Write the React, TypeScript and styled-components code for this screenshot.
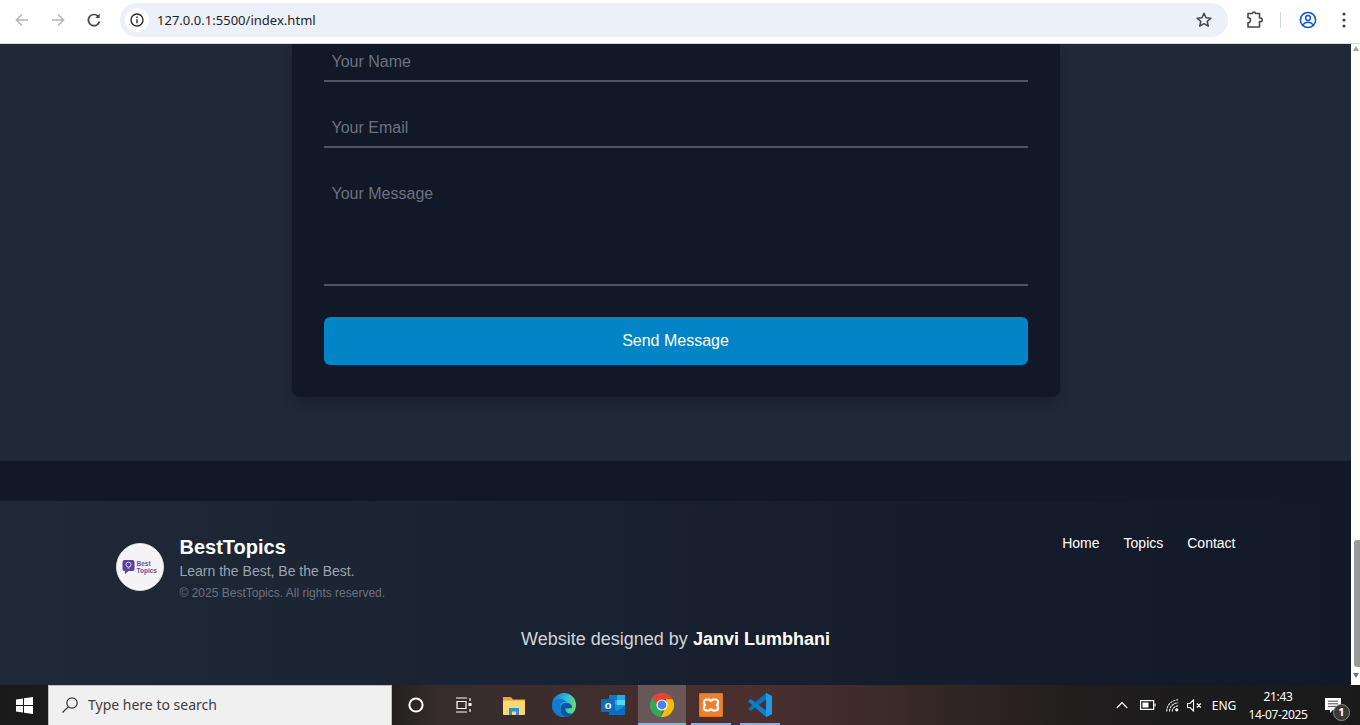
import React from "react";
import styled, { createGlobalStyle } from "styled-components";

const Global = createGlobalStyle`
  html, body { margin: 0; padding: 0; height: 100%; overflow: hidden; }
  #root { height: 100%; }
  * { box-sizing: border-box; }
  input::placeholder, textarea::placeholder { color: #6b7280; opacity: 1; }
`;

const Shell = styled.div`
  width: 1360px; height: 725px; display: flex; flex-direction: column; overflow: hidden;
  font-family: "Liberation Sans", Arial, sans-serif;
`;
const Toolbar = styled.header`
  height: 44px; flex: none; background: #fff; display: flex; align-items: center;
  padding: 0 0 4px 0; border-bottom: 1px solid #d9d9d9;
`;
const NavSlot = styled.div<{ $w: number }>`
  width: ${p => p.$w}px; flex: none; display: flex; align-items: center; justify-content: center;
`;
const NavGroup = styled.div`
  display: flex; padding-left: 4px; width: 120px; flex: none;
`;
const Omnibox = styled.div`
  width: 1108px; height: 34px; flex: none; border-radius: 17px; background: #ebf0f9;
  display: flex; align-items: center; padding: 0 15px 0 5px;
`;
const InfoChip = styled.div`
  width: 24px; height: 24px; border-radius: 50%; background: #fff; display: flex;
  align-items: center; justify-content: center; flex: none;
`;
const Url = styled.span`
  margin-left: 8px; font-family: "Noto Sans", sans-serif; font-size: 13px; color: #1f1f1f; flex: 1;
  letter-spacing: 0.02px;
`;
const Divider = styled.div`
  width: 1px; height: 16px; background: #c7d7f2; flex: none;
`;

const Viewport = styled.div`
  flex: 1; min-height: 0; display: flex;
`;
const Page = styled.div`
  flex: 1; min-width: 0; display: flex; flex-direction: column; background: #1f2937;
`;
const ContactSection = styled.section`
  padding-bottom: 64px; background: #1f2937;
`;
const Card = styled.form`
  width: 768px; margin: 0 auto; background: #111827; padding: 0 32px 32px;
  border-radius: 0 0 8px 8px; box-shadow: 0 10px 15px -3px rgba(0,0,0,.15), 0 4px 6px -4px rgba(0,0,0,.1);
  display: flex; flex-direction: column;
`;
const TextInput = styled.input`
  display: block; width: 100%; height: 38px; border: 0; border-bottom: 2px solid #4b5563;
  background: transparent; padding: 0 8px; font: 16px "Liberation Sans", Arial, sans-serif; color: #fff;
  margin-bottom: 28px; outline: none;
`;
const TextArea = styled.textarea`
  display: block; width: 100%; height: 110px; border: 0; border-bottom: 2px solid #4b5563;
  background: transparent; padding: 9px 8px 8px; font: 16px/18px "Liberation Sans", Arial, sans-serif; color: #fff;
  margin-bottom: 31px; outline: none; resize: none;
`;
const Send = styled.button`
  height: 48px; width: 100%; border: 0; border-radius: 6px; background: #0284c7; color: #fff;
  font: 16px "Liberation Sans", Arial, sans-serif;
`;
const Band = styled.div`
  height: 40px; background: #111827; flex: none;
`;
const Footer = styled.footer`
  flex: 1; background: linear-gradient(to right, #1f2937, #111827); padding: 32px 0;
`;
const FooterInner = styled.div`
  width: 1120px; margin: 0 auto;
`;
const FooterRow = styled.div`
  display: flex; justify-content: space-between; align-items: flex-start;
`;
const Brand = styled.div`
  display: flex; align-items: center; gap: 16px;
`;
const LogoBadge = styled.div`
  width: 48px; height: 48px; border-radius: 50%; background: #f5f3f6; border: 1px solid #d8d8d8;
  box-shadow: inset 0 0 0 1px #fff;
  display: flex; align-items: center; justify-content: center; flex: none;
`;
const BrandText = styled.div`
  display: flex; flex-direction: column;
`;
const BrandName = styled.div`
  font-size: 20px; line-height: 28px; font-weight: 700; color: #fff;
`;
const Tagline = styled.div`
  font-size: 14px; line-height: 20px; color: #9ca3af;
`;
const Copyright = styled.div`
  font-size: 12px; line-height: 16px; color: #6b7280; margin-top: 4px;
`;
const FooterNav = styled.nav`
  display: flex; gap: 24px;
`;
const FooterLink = styled.a`
  font-size: 14px; line-height: 20px; color: #fff;
`;
const Credit = styled.p`
  margin: 24px 0 0; text-align: center; font-size: 18px; line-height: 28px; color: #d1d5db;
  b { color: #fff; font-weight: 700; }
`;

const Scrollbar = styled.div`
  width: 9px; flex: none; background: #fff; display: flex; flex-direction: column; align-items: flex-end;
  padding-top: 2px;
`;
const ArrowUp = styled.div`
  width: 0; height: 0; border-left: 3.5px solid transparent; border-right: 3.5px solid transparent;
  border-bottom: 5px solid #a3a3a3; margin-right: 1px;
`;
const ArrowDown = styled.div`
  width: 0; height: 0; border-left: 3.5px solid transparent; border-right: 3.5px solid transparent;
  border-top: 5px solid #6f6f6f; margin-right: 1px; margin-top: 6px;
`;
const Thumb = styled.div`
  width: 6px; height: 127px; background: #9a9a9a; border-radius: 3px 0 0 3px; margin-top: 489px;
`;

const Taskbar = styled.div`
  height: 40px; flex: none; display: flex; align-items: stretch;
  background: linear-gradient(to right, #1a1a1a 0%, #1f1d1d 28%, #352c2c 32%, #4a302e 55%, #3d2b2a 64%, #1f1d1d 80%, #1a1a1a 100%);
`;
const StartButton = styled.div`
  width: 48px; flex: none; display: flex; align-items: center; justify-content: center;
`;
const SearchBox = styled.div`
  width: 344px; flex: none; background: #f0f0f0; border: 1px solid #bdbdbd; border-bottom: 0; display: flex; align-items: center;
  padding: 0 0 2px 12px; gap: 9px; color: #3d3d3d; font: 14px "Noto Sans", sans-serif;
`;
const TaskSlot = styled.div<{ $w: number; $active?: boolean; $run?: number }>`
  width: ${p => p.$w}px; flex: none; display: flex; align-items: center; justify-content: center; position: relative;
  background: ${p => (p.$active ? "rgba(255,255,255,.2)" : "transparent")};
  &::after {
    content: "";
    display: ${p => (p.$run ? "block" : "none")};
    position: absolute; bottom: 0; left: 50%; height: 2px; background: #76b9ed;
    width: ${p => p.$run}px; transform: translateX(-50%);
  }
`;
const Tray = styled.div`
  margin-left: auto; display: flex; align-items: center; color: #fff;
  font: 12px "Noto Sans", sans-serif;
`;
const TraySlot = styled.div<{ $w: number }>`
  width: ${p => p.$w}px; flex: none; display: flex; align-items: center; justify-content: center;
`;
const Clock = styled.div`
  width: 72px; text-align: center; line-height: 18px; font-size: 12px; letter-spacing: -0.35px; padding-top: 2px;
`;
const NotifyWrap = styled.div`
  width: 46px; height: 40px; display: flex; align-items: center; justify-content: center; position: relative; padding-right: 8px;
`;
const NotifyBadge = styled.span`
  position: absolute; left: 19px; top: 19px; width: 17px; height: 17px; border-radius: 50%;
  background: #3a3a3a; border: 1.5px solid #8a8a8a; color: #fff; font-size: 11px; font-weight: 700; line-height: 14px; text-align: center;
`;

const Arrow = ({ dir, color }: { dir: "l" | "r"; color: string }) => (
  <svg width="16" height="16" viewBox="0 0 16 16" fill="none" stroke={color} strokeWidth="1.6">
    {dir === "l" ? <path d="M14 8H2.5M8 2.5 2.5 8 8 13.5" /> : <path d="M2 8h11.5M8 2.5 13.5 8 8 13.5" />}
  </svg>
);

export default function App() {
  return (
    <Shell>
      <Global />
      <Toolbar>
        <NavGroup>
          <NavSlot $w={36}><Arrow dir="l" color="#b5b5b5" /></NavSlot>
          <NavSlot $w={36}><Arrow dir="r" color="#b5b5b5" /></NavSlot>
          <NavSlot $w={36}>
            <svg width="16" height="16" viewBox="0 0 16 16" fill="none" stroke="#474747" strokeWidth="1.7">
              <path d="M13.4 9.5A5.6 5.6 0 1 1 12 4.2" />
              <path d="M13.6 1.5v4.4H9.2" fill="#474747" stroke="none" />
            </svg>
          </NavSlot>
        </NavGroup>
        <Omnibox>
          <InfoChip>
            <svg width="16" height="16" viewBox="0 0 16 16" fill="none" stroke="#2b2b2b" strokeWidth="1.4">
              <circle cx="8" cy="8" r="6" />
              <path d="M8 7.2v4M8 4.6v1.3" />
            </svg>
          </InfoChip>
          <Url>127.0.0.1:5500/index.html</Url>
          <svg width="18" height="18" viewBox="0 0 18 18" fill="none" stroke="#474747" strokeWidth="1.5">
            <path d="M9 2.2l2 4.5 4.9.5-3.7 3.2 1.1 4.8L9 12.7l-4.3 2.5 1.1-4.8L2.1 7.2 7 6.7z" strokeLinejoin="round" />
          </svg>
        </Omnibox>
        <NavSlot $w={52}>
          <svg width="18" height="18" viewBox="0 0 18 18" fill="none" stroke="#474747" strokeWidth="1.6">
            <path d="M3 2.500h4.500c0-1 .8-1.500 1.500-1.500s1.500.5 1.500 1.500h4V7h1a1.800 1.800 0 0 1 0 3.600h-1V16H3v-4.200a2.500 2.500 0 0 0 0-5z" strokeLinejoin="round" />
          </svg>
        </NavSlot>
        <Divider />
        <NavSlot $w={53}>
          <svg width="18" height="18" viewBox="0 0 18 18" fill="none" stroke="#0b57d0" strokeWidth="1.5">
            <circle cx="9" cy="9" r="7.6" />
            <circle cx="9" cy="7" r="2.4" />
            <path d="M3.900 14c1.200-2 3-2.700 5.100-2.700s3.900.7 5.100 2.700" />
          </svg>
        </NavSlot>
        <NavSlot $w={19}>
          <svg width="4" height="16" viewBox="0 0 4 16" fill="#474747">
            <circle cx="2" cy="2" r="1.6" /><circle cx="2" cy="8" r="1.6" /><circle cx="2" cy="14" r="1.6" />
          </svg>
        </NavSlot>
      </Toolbar>
      <Viewport>
        <Page>
          <ContactSection>
            <Card onSubmit={e => e.preventDefault()}>
              <TextInput placeholder="Your Name" />
              <TextInput placeholder="Your Email" />
              <TextArea placeholder="Your Message" />
              <Send type="button">Send Message</Send>
            </Card>
          </ContactSection>
          <Band />
          <Footer>
            <FooterInner>
              <FooterRow>
                <Brand>
                  <LogoBadge>
                    <svg width="36" height="16" viewBox="0 0 36 16">
                      <rect x="0.5" y="1" width="12" height="11" rx="2" fill="#5a429c" />
                      <path d="M3 11.500v3.500l3.500-3z" fill="#5a429c" />
                      <circle cx="6.500" cy="5.600" r="2.500" fill="none" stroke="#e6defa" strokeWidth="0.9" />
                      <path d="M5.500 9h2" stroke="#e6defa" strokeWidth="0.9" />
                      <text x="14.500" y="6.800" fontFamily="Liberation Sans" fontSize="6.500" fontWeight="700" fill="#64509f">Best</text>
                      <text x="14.500" y="13.800" fontFamily="Liberation Sans" fontSize="6.500" fontWeight="700" fill="#64509f">Topics</text>
                    </svg>
                  </LogoBadge>
                  <BrandText>
                    <BrandName>BestTopics</BrandName>
                    <Tagline>Learn the Best, Be the Best.</Tagline>
                    <Copyright>© 2025 BestTopics. All rights reserved.</Copyright>
                  </BrandText>
                </Brand>
                <FooterNav>
                  <FooterLink>Home</FooterLink>
                  <FooterLink>Topics</FooterLink>
                  <FooterLink>Contact</FooterLink>
                </FooterNav>
              </FooterRow>
              <Credit>Website designed by <b>Janvi Lumbhani</b></Credit>
            </FooterInner>
          </Footer>
        </Page>
        <Scrollbar>
          <ArrowUp />
          <Thumb />
          <ArrowDown />
        </Scrollbar>
      </Viewport>
      <Taskbar>
        <StartButton>
          <svg width="17" height="17" viewBox="0 0 17 17" fill="#fff">
            <path d="M0 2.400 7 1.400v6.600H0zM8 1.200 17 0v8H8zM0 9h7v6.600l-7-1zM8 9h9v8l-9-1.200z" />
          </svg>
        </StartButton>
        <SearchBox>
          <svg width="18" height="18" viewBox="0 0 18 18" fill="none" stroke="#333" strokeWidth="1.2">
            <circle cx="11" cy="7" r="5.200" />
            <path d="M7.200 10.800 1.500 16.500" />
          </svg>
          Type here to search
        </SearchBox>
        <TaskSlot $w={48}>
          <svg width="16" height="16" viewBox="0 0 16 16" fill="none" stroke="#fff" strokeWidth="2"><circle cx="8" cy="8" r="6.600" /></svg>
        </TaskSlot>
        <TaskSlot $w={48}>
          <svg width="18" height="16" viewBox="0 0 18 16" fill="none" stroke="#fff" strokeWidth="1.200">
            <path d="M1 1h11M1 15h11M2 4.500h9v7H2zM15 1v3M15 12v3" />
            <rect x="13.500" y="6" width="3" height="3" fill="#fff" stroke="none" />
          </svg>
        </TaskSlot>
        <TaskSlot $w={52}>
          <svg width="22" height="19" viewBox="0 0 22 19">
            <path d="M0 1h8l2 2.500h12V6H0z" fill="#dfa63c" />
            <rect y="4.500" width="22" height="14.500" rx="1" fill="#fcd873" />
            <path d="M6 19v-7h10v7h-3v-3.500H9V19z" fill="#2f8fd8" />
          </svg>
        </TaskSlot>
        <TaskSlot $w={48}>
          <svg width="24" height="24" viewBox="0 0 24 24">
            <defs>
              <linearGradient id="edgeA" x1="0" y1="0.4" x2="1" y2="0.6">
                <stop offset="0" stopColor="#1279cf" />
                <stop offset="0.55" stopColor="#2fbcdc" />
                <stop offset="1" stopColor="#72dc66" />
              </linearGradient>
            </defs>
            <circle cx="12" cy="12" r="12" fill="url(#edgeA)" />
            <path d="M8.500 15.500C8.500 11 12.500 9 16 10c3 .9 4.500 3 4 5l-6.500.500c-.5 2.500 2 5 5 5 1.500 0 3-.4 4-1.200A12 12 0 0 1 12 24C8 24 8.500 19 8.500 15.500z" fill="#0c55a0" />
            <path d="M0 12.500c.6-4 4.500-6.500 8-6.500 3 0 5.500 1.400 6.500 3.200-3-1-6.500.5-6.500 5 0 4 2 7.800 5.500 9.700C6 24.500 0 19 0 12.500z" fill="#1479cf" />
          </svg>
        </TaskSlot>
        <TaskSlot $w={50}>
          <svg width="24" height="22" viewBox="0 0 24 22">
            <rect x="8" y="1" width="16" height="20" rx="1.500" fill="#1490df" />
            <path d="M8 1h8v5H8z" fill="#0f78c9" />
            <path d="M16 1h8v5h-8z" fill="#28a8ea" />
            <path d="M8 6h8v5H8z" fill="#28a8ea" />
            <path d="M16 6h8v5h-8z" fill="#50d9ff" />
            <path d="M8 21V12l8 5 8-5v9z" fill="#0f6cbd" />
            <rect x="0" y="5" width="14" height="13" rx="1.500" fill="#0f6cbd" />
            <text x="7" y="15" textAnchor="middle" fontFamily="Liberation Sans" fontSize="11" fontWeight="700" fill="#fff">o</text>
          </svg>
        </TaskSlot>
        <TaskSlot $w={48} $active $run={48}>
          <svg width="24" height="24" viewBox="0 0 24 24">
            <path d="M12 6H22.400A12 12 0 0 0 2.400 4.800L7 12.500Z" fill="#ea4335" />
            <path d="M22.400 6A12 12 0 0 1 11 24L17 12 16 6Z" fill="#fbbc04" />
            <path d="M11 24A12 12 0 0 1 2.400 4.800L7 12.500 12 17Z" fill="#34a853" />
            <circle cx="12" cy="12" r="5.600" fill="#fff" />
            <circle cx="12" cy="12" r="4.400" fill="#4285f4" />
          </svg>
        </TaskSlot>
        <TaskSlot $w={50} $run={40}>
          <svg width="24" height="24" viewBox="0 0 24 24">
            <rect width="24" height="24" rx="2" fill="#ef7f2c" stroke="#c96a22" strokeWidth="1" />
            <path d="M7.500 6.500h2.500c1 0 1.200 1.500 2 1.500s1-1.500 2-1.500h2.500A2.500 2.500 0 0 1 19 9v1.500c0 .8-1.200 1-1.200 1.500s1.200.7 1.200 1.500V15a2.500 2.500 0 0 1-2.500 2.500H14c-1 0-1.200-1.500-2-1.500s-1 1.500-2 1.500H7.500A2.500 2.500 0 0 1 5 15v-1.500c0-.8 1.200-1 1.200-1.500S5 11.300 5 10.500V9a2.500 2.500 0 0 1 2.500-2.500z" fill="none" stroke="#fff" strokeWidth="2.200" />
          </svg>
        </TaskSlot>
        <TaskSlot $w={48} $run={40}>
          <svg width="24" height="24" viewBox="0 0 100 100">
            <path d="M75 0 100 12 75 27 12 75 0 66z" fill="#0a72b8" />
            <path d="M75 100 100 88 75 73 12 25 0 34z" fill="#0b80cc" />
            <path d="M75 0 100 12V88L75 100z" fill="#1e9ae8" />
          </svg>
        </TaskSlot>
        <Tray>
          <TraySlot $w={24}>
            <svg width="12" height="8" viewBox="0 0 12 8" fill="none" stroke="#fff" strokeWidth="1.200"><path d="M.8 7 6 1.500 11.200 7" /></svg>
          </TraySlot>
          <TraySlot $w={28}>
            <svg width="16" height="10" viewBox="0 0 16 10" fill="none" stroke="#fff" strokeWidth="1.200">
              <rect x=".6" y=".6" width="13" height="8.800" />
              <rect x="2.500" y="2.500" width="6" height="5" fill="#fff" stroke="none" />
              <path d="M15 3.500v3" />
            </svg>
          </TraySlot>
          <TraySlot $w={20}>
            <svg width="13" height="13" viewBox="0 0 13 13" fill="none" stroke="#e8e8e8" strokeWidth="1.100">
              <path d="M.7 12.500C.7 6 6 .8 12.200.8M3.500 12.500c0-4.800 4-8.700 8.700-8.700M6.300 12.500c0-3 2.700-5.700 5.900-5.700" strokeDasharray="2.500 .7" />
              <circle cx="10.800" cy="10.800" r="1.600" fill="#fff" stroke="none" />
            </svg>
          </TraySlot>
          <TraySlot $w={24}>
            <svg width="15" height="13" viewBox="0 0 15 13" fill="none" stroke="#fff" strokeWidth="1.100">
              <path d="M.5 4.500H3L6.500 1v11L3 8.500H.5zM9.800 4.500l4 4M13.800 4.500l-4 4" />
            </svg>
          </TraySlot>
          <TraySlot $w={36}>ENG</TraySlot>
          <Clock>21:43<br />14-07-2025</Clock>
          <NotifyWrap>
            <svg width="16" height="15" viewBox="0 0 16 15" fill="#fff">
              <path d="M0 0h16v12H8l-3 3v-3H0z" />
              <path d="M3 3.200h10M3 5.800h10M3 8.400h10" stroke="#333" strokeWidth=".9" />
            </svg>
            <NotifyBadge>1</NotifyBadge>
          </NotifyWrap>
        </Tray>
      </Taskbar>
    </Shell>
  );
}
